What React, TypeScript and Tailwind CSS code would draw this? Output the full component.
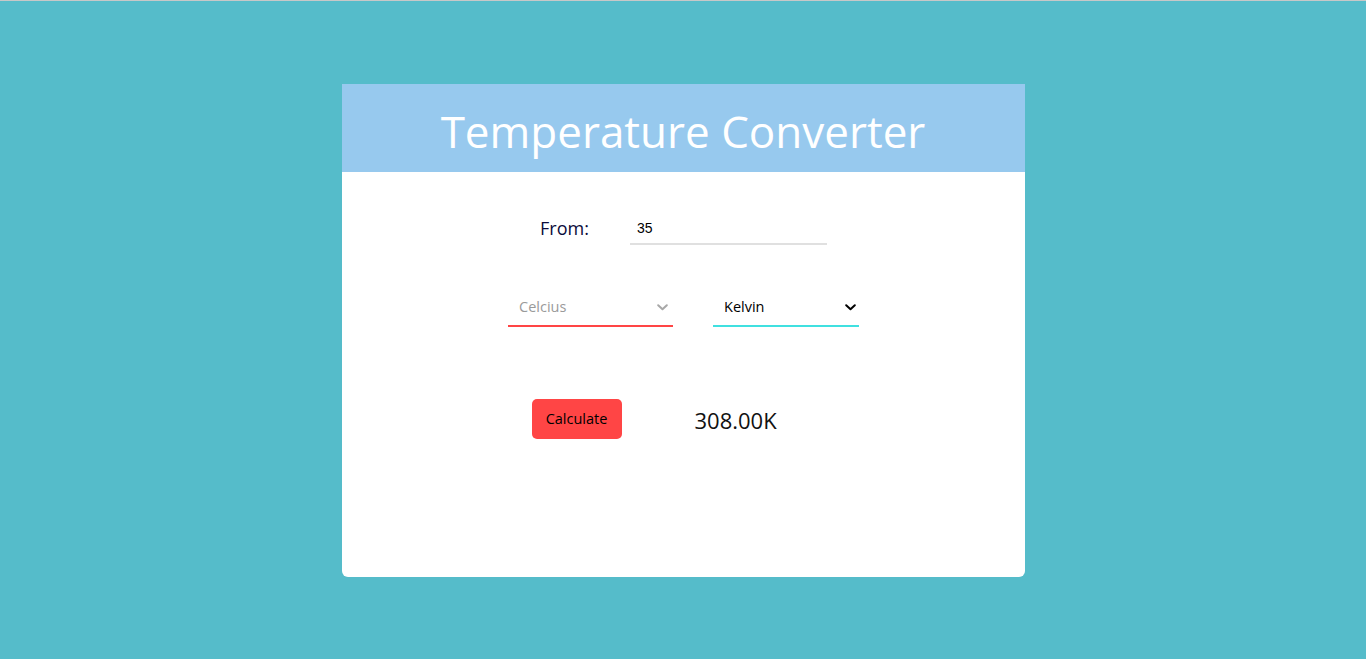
import { useState } from 'react'

function Chevron({ color, right }: { color: string; right: string }) {
  return (
    <svg width="11" height="7" viewBox="0 0 11 7" className={`pointer-events-none absolute top-[12px] ${right}`}>
      <path d="M1.2 1.2 L5.5 5.3 L9.8 1.2" fill="none" stroke={color} strokeWidth="2" strokeLinecap="round" strokeLinejoin="round" />
    </svg>
  )
}

export default function App() {
  const [value, setValue] = useState('35')
  const [from, setFrom] = useState('')
  const [to, setTo] = useState('Kelvin')

  return (
    <div className="min-h-[659px] bg-[#55bcca] font-['Open_Sans','Noto_Sans',sans-serif]">
      <div className="h-px bg-[#c8c8c8]" />
      <div className="flex justify-center pt-[83px]">
        <div className="w-[683px] h-[493px] bg-white rounded-b-[6px] overflow-hidden">
          {/* Header */}
          <div className="h-[88px] bg-[#97c9ee] flex items-center justify-center">
            <h1 className="text-white text-[44px] font-normal leading-none pt-[6px]">
              Temperature Converter
            </h1>
          </div>

          {/* From row */}
          <div className="flex justify-center items-center gap-[40px] pt-[42px] pl-[1px]">
            <label className="text-[18px] text-[#0b0b3b] w-[50px] -mt-[2px]">From:</label>
            <input
              value={value}
              onChange={(e) => setValue(e.target.value)}
              className="w-[197px] h-[31px] border-b-2 border-[#e0e0e0] px-[7px] pb-[2px] text-[14px] text-black outline-none font-['Liberation_Sans',sans-serif]"
            />
          </div>

          {/* Units row */}
          <div className="flex justify-center gap-[40px] pt-[47px] pl-[1px]">
            <div className="relative w-[165px]">
              <select
                value={from}
                onChange={(e) => setFrom(e.target.value)}
                className="appearance-none w-full h-[35px] bg-transparent border-b-2 border-[#ff4545] px-[11px] pb-[3px] text-[14.5px] text-[#9a9a9a] outline-none"
              >
                <option value="" disabled>Celcius</option>
                <option value="Celcius">Celcius</option>
                <option value="Fahrenheit">Fahrenheit</option>
                <option value="Kelvin">Kelvin</option>
              </select>
              <Chevron color="#a8a8a8" right="right-[5px]" />
            </div>
            <div className="relative w-[146px]">
              <select
                value={to}
                onChange={(e) => setTo(e.target.value)}
                className="appearance-none w-full h-[35px] bg-transparent border-b-2 border-[#40e0e0] px-[11px] pb-[3px] text-[14.5px] text-black outline-none"
              >
                <option value="Celcius">Celcius</option>
                <option value="Fahrenheit">Fahrenheit</option>
                <option value="Kelvin">Kelvin</option>
              </select>
              <Chevron color="#000" right="right-[3px]" />
            </div>
          </div>

          {/* Calculate row */}
          <div className="flex justify-center items-center pt-[72px]">
            <button className="w-[90px] h-[40px] bg-[#ff4545] rounded-[5px] text-[14.5px] text-black">
              Calculate
            </button>
            <div className="ml-[73px] w-[140px] text-[22px] text-[#111] mt-[3px]">308.00K</div>
          </div>
        </div>
      </div>
    </div>
  )
}
